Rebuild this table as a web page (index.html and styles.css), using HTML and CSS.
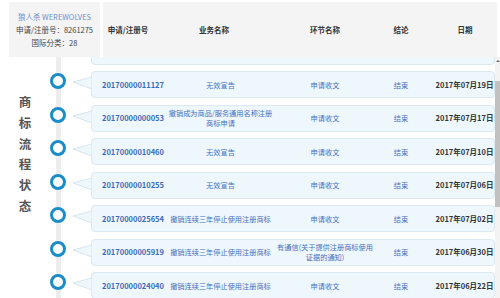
FILE: index.html
```
<!DOCTYPE html>
<html lang="zh-CN">
<head>
    <meta charset="UTF-8">
    <meta name="viewport" content="width=device-width, initial-scale=1.0">
    <title>商标流程状态</title>
    <link rel="stylesheet" href="styles.css">
</head>
<body>
    <div class="page">
        <div class="head">
            <div class="mark-info">
                <div class="mark-name">狼人杀 WEREWOLVES</div>
                <div>申请/注册号：8261275</div>
                <div>国际分类：28</div>
            </div>
            <div class="head-cols">
                <span>申请/注册号</span>
                <span>业务名称</span>
                <span>环节名称</span>
                <span>结论</span>
                <span class="col-date">日期</span>
            </div>
        </div>

        <div class="main">
            <div class="side-title">
                <span>商</span><span>标</span><span>流</span><span>程</span><span>状</span><span>态</span>
            </div>

            <div class="flow-wrap">
                <ul class="flow">
                    <!-- previous record, scrolled out of view -->
                    <li class="flow-item">
                        <div class="dot-cell"><i class="dot"></i><svg class="arrow" width="20" height="27"><polygon points="20,6 1,11 20,18"/></svg></div>
                        <div class="bubble"></div>
                    </li>
                    <li class="flow-item">
                        <div class="dot-cell"><i class="dot"></i><svg class="arrow" width="20" height="27"><polygon points="20,6 1,11 20,18"/></svg></div>
                        <div class="bubble">
                            <span class="num">20170000011127</span>
                            <span>无效宣告</span>
                            <span class="col-step">申请收文</span>
                            <span>结束</span>
                            <span class="col-date date">2017年07月19日</span>
                        </div>
                    </li>
                    <li class="flow-item">
                        <div class="dot-cell"><i class="dot"></i><svg class="arrow" width="20" height="27"><polygon points="20,6 1,11 20,18"/></svg></div>
                        <div class="bubble">
                            <span class="num">20170000000053</span>
                            <span>撤销成为商品/服务通用名称注册商标申请</span>
                            <span class="col-step">申请收文</span>
                            <span>结束</span>
                            <span class="col-date date">2017年07月17日</span>
                        </div>
                    </li>
                    <li class="flow-item">
                        <div class="dot-cell"><i class="dot"></i><svg class="arrow" width="20" height="27"><polygon points="20,6 1,11 20,18"/></svg></div>
                        <div class="bubble">
                            <span class="num">20170000010460</span>
                            <span>无效宣告</span>
                            <span class="col-step">申请收文</span>
                            <span>结束</span>
                            <span class="col-date date">2017年07月10日</span>
                        </div>
                    </li>
                    <li class="flow-item">
                        <div class="dot-cell"><i class="dot"></i><svg class="arrow" width="20" height="27"><polygon points="20,6 1,11 20,18"/></svg></div>
                        <div class="bubble">
                            <span class="num">20170000010255</span>
                            <span>无效宣告</span>
                            <span class="col-step">申请收文</span>
                            <span>结束</span>
                            <span class="col-date date">2017年07月06日</span>
                        </div>
                    </li>
                    <li class="flow-item">
                        <div class="dot-cell"><i class="dot"></i><svg class="arrow" width="20" height="27"><polygon points="20,6 1,11 20,18"/></svg></div>
                        <div class="bubble">
                            <span class="num">20170000025654</span>
                            <span>撤销连续三年停止使用注册商标</span>
                            <span class="col-step">申请收文</span>
                            <span>结束</span>
                            <span class="col-date date">2017年07月02日</span>
                        </div>
                    </li>
                    <li class="flow-item">
                        <div class="dot-cell"><i class="dot"></i><svg class="arrow" width="20" height="27"><polygon points="20,6 1,11 20,18"/></svg></div>
                        <div class="bubble">
                            <span class="num">20170000005919</span>
                            <span>撤销连续三年停止使用注册商标</span>
                            <span class="col-step">有通信(关于提供注册商标使用证据的通知)</span>
                            <span>结束</span>
                            <span class="col-date date">2017年06月30日</span>
                        </div>
                    </li>
                    <li class="flow-item">
                        <div class="dot-cell"><i class="dot"></i><svg class="arrow" width="20" height="27"><polygon points="20,6 1,11 20,18"/></svg></div>
                        <div class="bubble">
                            <span class="num">20170000024040</span>
                            <span>撤销连续三年停止使用注册商标</span>
                            <span class="col-step">申请收文</span>
                            <span>结束</span>
                            <span class="col-date date">2017年06月22日</span>
                        </div>
                    </li>
                </ul>
            </div>

            <div class="scrollbar">
                <i class="scroll-up"></i>
                <i class="scroll-thumb"></i>
            </div>
        </div>
    </div>
</body>
</html>
```

FILE: styles.css
```
body {
    margin: 0;
    padding: 0;
    background: #fff;
    font-family: "Noto Sans CJK SC", "Microsoft YaHei", sans-serif;
    color: #333;
}
.page {
    width: 500px;
    height: 298px;
    overflow: hidden;
}
.head {
    display: flex;
    gap: 3px;
    height: 55px;
    margin-top: 2px;
    padding: 0 3px 0 9px;
}
.mark-info {
    width: 91px;
    flex: none;
    background: #f4f4f4;
    text-align: center;
    font-size: 7.5px;
    line-height: 13px;
    color: #444;
    padding-top: 8px;
    box-sizing: border-box;
}
.mark-name {
    color: #6f8fcc;
}
.head-cols {
    flex: 1;
    display: grid;
    grid-template-columns: 50px 122px 100px 52px 1fr;
    align-items: center;
    background: #f4f4f4;
    font-size: 7.5px;
    font-weight: bold;
    text-align: center;
    color: #333;
}
.head-cols .col-date {
    padding-left: 6px;
}
.main {
    display: flex;
    height: 241px;
    overflow: hidden;
}
.side-title {
    width: 50px;
    flex: none;
    display: flex;
    flex-direction: column;
    align-items: center;
    padding-top: 35px;
    box-sizing: border-box;
    font-size: 12.5px;
    line-height: 20.8px;
    font-weight: bold;
    color: #555;
}
.flow-wrap {
    flex: 1;
    overflow: hidden;
    background: linear-gradient(to right, transparent 6px, #ededed 6px, #ededed 11px, transparent 11px);
}
.flow {
    list-style: none;
    margin: -19.5px 0 0 0;
    padding: 0;
}
.flow-item {
    display: flex;
    height: 27px;
    margin-bottom: 6.5px;
}
.dot-cell {
    width: 41px;
    flex: none;
    display: flex;
    align-items: flex-start;
}
.dot {
    width: 16px;
    height: 16px;
    margin-top: 2px;
    border: 3px solid #1a8dc8;
    border-radius: 50%;
    background: #fff;
    box-sizing: border-box;
}
.arrow {
    margin-left: 6px;
    margin-right: -1px;
    position: relative;
    z-index: 1;
}
.arrow polygon {
    fill: #eef7fc;
    stroke: #d6e5ee;
    stroke-width: 1;
}
.bubble {
    flex: 1;
    display: grid;
    grid-template-columns: 70px 105px 114px 28px 1fr;
    align-items: center;
    padding-left: 6px;
    background: #eef7fc;
    border: 1px solid #dbe9f2;
    border-radius: 4px;
    box-sizing: border-box;
    font-size: 7.2px;
    line-height: 10px;
    text-align: center;
    color: #4670c0;
}
.bubble .num {
    font-weight: bold;
    font-size: 7.5px;
    color: #3c6bb8;
}
.bubble .col-step {
    padding: 0 12px 0 2px;
}
.bubble .col-date {
    padding-left: 20px;
}
.bubble .date {
    font-weight: bold;
    font-size: 7.5px;
    color: #333;
}
.scrollbar {
    width: 5px;
    flex: none;
    display: flex;
    flex-direction: column;
    align-items: center;
    background: #f3f3f3;
}
.scroll-up {
    width: 0;
    height: 0;
    margin-top: 3px;
    border-left: 2px solid transparent;
    border-right: 2px solid transparent;
    border-bottom: 2px solid #666;
}
.scroll-thumb {
    width: 5px;
    height: 126px;
    margin-top: 19px;
    background: #c1c1c1;
}
```
